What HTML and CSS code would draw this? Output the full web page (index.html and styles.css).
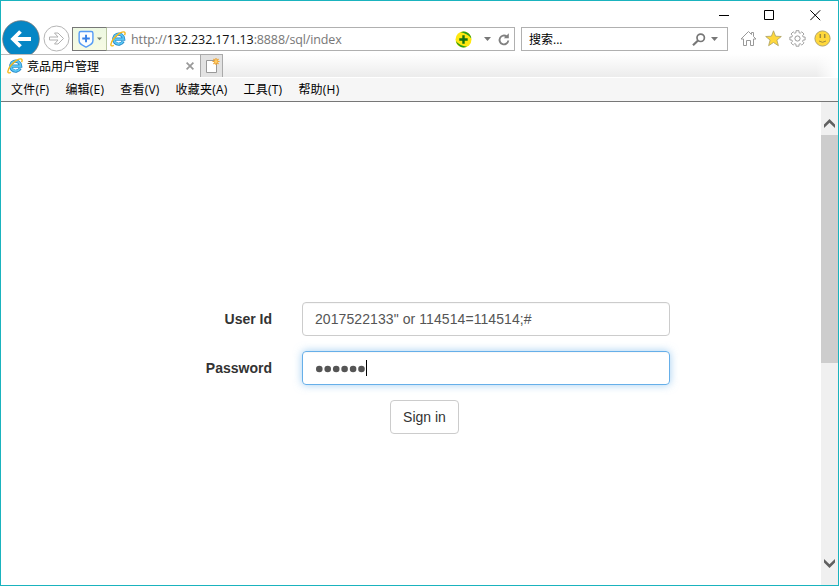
FILE: index.html
```html
<!DOCTYPE html>
<html lang="zh-CN">
<head>
<meta charset="utf-8">
<title>竞品用户管理</title>
<link rel="stylesheet" href="styles.css">
</head>
<body>
<svg class="defs" width="0" height="0" aria-hidden="true">
  <symbol id="ie" viewBox="0 0 16 16">
    <path d="M13.200 10.400A5 5 0 1 1 13.700 8.200H5" fill="none" stroke="#2387c6" stroke-width="3.200"/>
    <path d="M13 10.400A4.900 4.900 0 1 1 13.600 8.200H5" fill="none" stroke="#59c5f3" stroke-width="1.900"/>
    <path d="M3.700 14.200C2.300 15.300.7 15.200.9 13.300 1.200 10.300 5 5.200 9.400 2.300 12 .6 15 .2 15.100 2.200c0 .8-.2 1.300-.5 1.900" fill="none" stroke="#f4b91e" stroke-width="1.400"/>
  </symbol>
</svg>
<div class="window">
  <header class="chrome">
    <div class="titlebar">
      <svg width="11" height="11"><path d="M0 5.500h10" stroke="#000"/></svg>
      <svg width="11" height="11"><path d="M.5.5h9v9h-9z" fill="none" stroke="#000"/></svg>
      <svg width="11" height="11"><path d="M.3.3l9.900 9.900M10.200.3L.3 10.200" stroke="#000"/></svg>
    </div>
    <div class="navbar">
      <svg class="back" width="38" height="38" viewBox="0 0 38 38"><circle cx="19" cy="19" r="18.300" fill="#0586c5" stroke="#777" stroke-width=".8"/><path d="M29 19H11M18.500 11.500L11 19l7.500 7.500" fill="none" stroke="#fff" stroke-width="3.800"/></svg>
      <svg class="forward" width="27" height="27" viewBox="0 0 27 27"><circle cx="13.500" cy="13.500" r="12.500" fill="#fff" stroke="#b5b5b5"/><path d="M6.500 12h8.500l-3.500-4h3.500l5.500 5.500-5.500 5.500h-3.500l3.500-4H6.500z" fill="#fff" stroke="#b0b0b0"/></svg>
      <div class="address">
        <div class="shield">
          <svg width="17" height="19" viewBox="0 0 18 20"><path d="M3 1.500h11q1.800 0 1.800 1.800v8c0 3.500-3 4.500-7.300 6.700C4.200 15.800 1.200 14.800 1.200 11.300v-8Q1.200 1.500 3 1.500z" fill="#fafdff" stroke="#559bf5" stroke-width="1.500"/><path d="M8.500 5v8M4.500 9h8" stroke="#347fe7" stroke-width="2"/></svg>
          <svg width="5" height="4"><path d="M0 .5h5L2.500 3.300z" fill="#76806f"/></svg>
        </div>
        <svg class="ie-icon" width="16" height="16"><use href="#ie"/></svg>
        <div class="url">http://<span>132.232.171.13</span>:8888/sql/index</div>
        <svg class="plus-ball" width="17" height="17" viewBox="0 0 17 17"><circle cx="8.500" cy="8.500" r="8" fill="#ffe810"/><path d="M5.500 1.200A8 8 0 0 1 16.400 7.500Q12 2 5.500 1.200zM.8 10A8 8 0 0 0 12 15.700Q5 15 .8 10z" fill="#299c19"/><path d="M8.500 4.300v8.400M4.300 8.500h8.400" stroke="#12720f" stroke-width="2.400"/></svg>
        <svg class="drop" width="7" height="4"><path d="M0 0h7L3.500 4z" fill="#777"/></svg>
        <svg class="reload" width="12" height="13" viewBox="0 0 12 13"><path d="M8.700 3.500A4.400 4.400 0 1 0 10.300 7.500" fill="none" stroke="#808080" stroke-width="1.900"/><path d="M5.800 5.300h5V.3z" fill="#808080"/></svg>
      </div>
      <div class="search">
        <span>搜索...</span>
        <svg width="14" height="13" viewBox="0 0 14 13"><circle cx="8.700" cy="4.800" r="3.700" fill="none" stroke="#777" stroke-width="1.700"/><path d="M6 7.500L1 12.200" stroke="#777" stroke-width="2.200"/></svg>
        <svg class="drop" width="7" height="4"><path d="M0 0h7L3.500 4z" fill="#777"/></svg>
      </div>
      <div class="tools">
        <svg width="17" height="17" viewBox="0 0 17 17"><path d="M3.500 15.500V9H1L8.500 1.500 11.500 4.500V2.500h2v4L16 9h-2.500v6.500h-3v-5h-4v5z" fill="#fff" stroke="#999"/></svg>
        <svg width="17" height="17" viewBox="0 0 17 17"><path d="M8.500.8l2.100 5.400 5.700.3-4.400 3.600 1.500 5.600-4.900-3.200-4.900 3.200 1.500-5.600L.7 6.500l5.700-.3z" fill="#ffd83c" stroke="#aaa062" stroke-width=".8"/></svg>
        <svg width="17" height="17" viewBox="0 0 17 17"><path d="M7 .7h3v2l1.300.5L12.800 1.800l2.200 2.200-1.400 1.600.5 1.400h2v3h-2l-.5 1.400 1.400 1.500-2.200 2.200-1.500-1.400-1.300.5v2H7v-2l-1.300-.5-1.500 1.400L2 12.900l1.400-1.500L2.900 10h-2V7h2l.5-1.400L2 4l2.200-2.200 1.500 1.400L7 2.700z" fill="#fff" stroke="#999" stroke-width=".9"/><circle cx="8.500" cy="8.500" r="2.600" fill="#fff" stroke="#999"/></svg>
        <svg width="17" height="17" viewBox="0 0 17 17"><circle cx="8.500" cy="8.500" r="7.600" fill="#ffd83c" stroke="#aa9d66" stroke-width=".9"/><path d="M6.300 4v4M10.700 4v4" stroke="#a08a3c" stroke-width="1.500"/><path d="M5 11q3.500 2.600 7 0" fill="none" stroke="#a08a3c"/></svg>
      </div>
    </div>
  </header>
  <div class="tabs">
    <div class="tab">
      <svg width="16" height="16"><use href="#ie"/></svg>
      <span>竞品用户管理</span>
      <svg class="tab-close" width="8" height="8"><path d="M.6.6l6.800 6.800M7.400.6L.6 7.400" stroke="#999" stroke-width="1.700"/></svg>
    </div>
    <div class="new-tab"><svg width="15" height="16" viewBox="0 0 15 16"><path d="M1.500 2.500h10v12h-10z" fill="#fff" stroke="#999"/><path d="M11 0v7M7.500 3.500h7M8.500 1l5 5M13.500 1l-5 5" stroke="#efa22e" stroke-width="1.200"/><circle cx="11" cy="3.500" r="1.500" fill="#ffce65"/></svg></div>
  </div>
  <nav class="menu"><span>文件(F)</span><span>编辑(E)</span><span>查看(V)</span><span>收藏夹(A)</span><span>工具(T)</span><span>帮助(H)</span></nav>
  <div class="viewport">
    <main class="page">
      <form class="login">
        <label>User Id</label>
        <div class="field user">2017522133" or 114514=114514;#</div>
        <label>Password</label>
        <div class="field focused"><svg width="53" height="17"><g fill="#555"><circle cx="4.300" cy="9" r="3.300"/><circle cx="12.700" cy="9" r="3.300"/><circle cx="21.200" cy="9" r="3.300"/><circle cx="29.600" cy="9" r="3.300"/><circle cx="38.100" cy="9" r="3.300"/><circle cx="46.500" cy="9" r="3.300"/></g><path d="M51.500 0v16" stroke="#000"/></svg></div>
        <button class="sign-in" type="button">Sign in</button>
      </form>
    </main>
    <div class="scrollbar">
      <svg width="11" height="9"><path d="M0 5.500L5.500 0 11 5.500V9L5.500 3.800 0 9z" fill="#606060"/></svg>
      <div class="thumb"></div>
      <svg class="down" width="11" height="9"><path d="M0 3.500L5.500 9 11 3.500V0L5.500 5.200 0 0z" fill="#606060"/></svg>
    </div>
  </div>
</div>
</body>
</html>
```
FILE: styles.css
```css
* { box-sizing: border-box; }
body { margin: 0; background: #fff; color: #000; font: 12px "Open Sans", "Noto Sans CJK SC", sans-serif; }
svg { display: block; flex: none; }
.defs { position: absolute; }
.window { height: 586px; border: 1px solid #1ab3be; display: flex; flex-direction: column; }
.chrome { height: 53px; overflow: hidden; flex: none; }
.titlebar { height: 25px; padding: 9px 17px 0 0; display: flex; justify-content: flex-end; gap: 35px; }
.titlebar svg:first-child { margin-right: -1px; }
.navbar { height: 28px; display: flex; align-items: flex-start; padding-left: 1px; }
.back { margin-top: -6px; }
.forward { margin: -1px 0 0 3px; }
.address { width: 443px; height: 24px; margin: 1px 0 0 2px; border: 1px solid #b0b0b0; display: flex; align-items: center; }
.shield { width: 35px; height: 24px; margin-left: -1px; flex: none; border: 1px solid #777; border-right-color: #b9c7a2; background: linear-gradient(#ecf8e2, #f7fbe4); display: flex; align-items: center; padding-left: 5px; gap: 2px; }
.ie-icon { margin-left: 3px; }
.url { flex: 1; margin-left: 5px; padding-top: 2px; color: #777; font-size: 12.5px; letter-spacing: -.12px; line-height: 20px; white-space: nowrap; }
.url span { color: #111; }
.plus-ball { margin-right: 12px; }
.address .drop { margin-right: 7px; }
.reload { margin-right: 4px; }
.search { width: 207px; height: 24px; margin: 1px 0 0 6px; border: 1px solid #b0b0b0; display: flex; align-items: center; padding: 0 9px 0 7px; }
.search span { flex: 1; padding-top: 1px; line-height: 20px; }
.search .drop { margin-left: 5px; }
.tools { display: flex; gap: 7.500px; margin: 4px 0 0 12px; }
.tabs { height: 23px; flex: none; display: flex; background: linear-gradient(to right, transparent 815px, #fff 835px), linear-gradient(#fff, #ececec); }
.tab { width: 199px; background: #fff; border-top: 1px solid #bbb; display: flex; align-items: center; padding: 0 6px 0 6px; }
.tab span { flex: 1; margin-left: 4px; padding-top: 1px; line-height: 20px; }
.new-tab { width: 23px; border: 1px solid #aaa; border-bottom: 0; background: #e2e2e2; display: flex; padding: 3px 0 0 4px; }
.menu { height: 25px; flex: none; background: #f6f6f6; border-top: 1px solid #fff; border-bottom: 1px solid #777; display: flex; gap: 16px; padding: 2px 0 0 10px; letter-spacing: .22px; line-height: 20px; white-space: nowrap; }
.viewport { flex: 1; min-height: 0; display: flex; }
.page { flex: 1; padding-top: 200px; }
.login { width: 469px; margin-left: 200px; display: grid; grid-template-columns: 71px 368px; column-gap: 30px; row-gap: 15px; font: 14px/20px "Liberation Sans", Arial, sans-serif; }
.login label { font-weight: bold; color: #333; text-align: right; padding-top: 7px; margin-left: -10px; }
.field { height: 34px; border: 1px solid #ccc; border-radius: 4px; padding: 6px 12px; color: #555; box-shadow: inset 0 1px 1px rgba(0,0,0,.03); white-space: nowrap; }
.user { letter-spacing: .08px; }
.focused { border-color: #66afe9; box-shadow: inset 0 1px 1px rgba(0,0,0,.03), 0 0 8px rgba(102,175,233,.6); padding-top: 8px; }
.sign-in { grid-column: 2; width: 69px; height: 34px; margin-left: 88px; padding: 0; border: 1px solid #ccc; border-radius: 4px; background: #fff; color: #333; font: inherit; }
.scrollbar { width: 17px; background: #f0f0f0; display: flex; flex-direction: column; align-items: center; padding-top: 17px; }
.thumb { width: 17px; height: 228px; margin-top: 7px; background: #cdcdcd; }
.down { margin: auto 0 17px; }
```
